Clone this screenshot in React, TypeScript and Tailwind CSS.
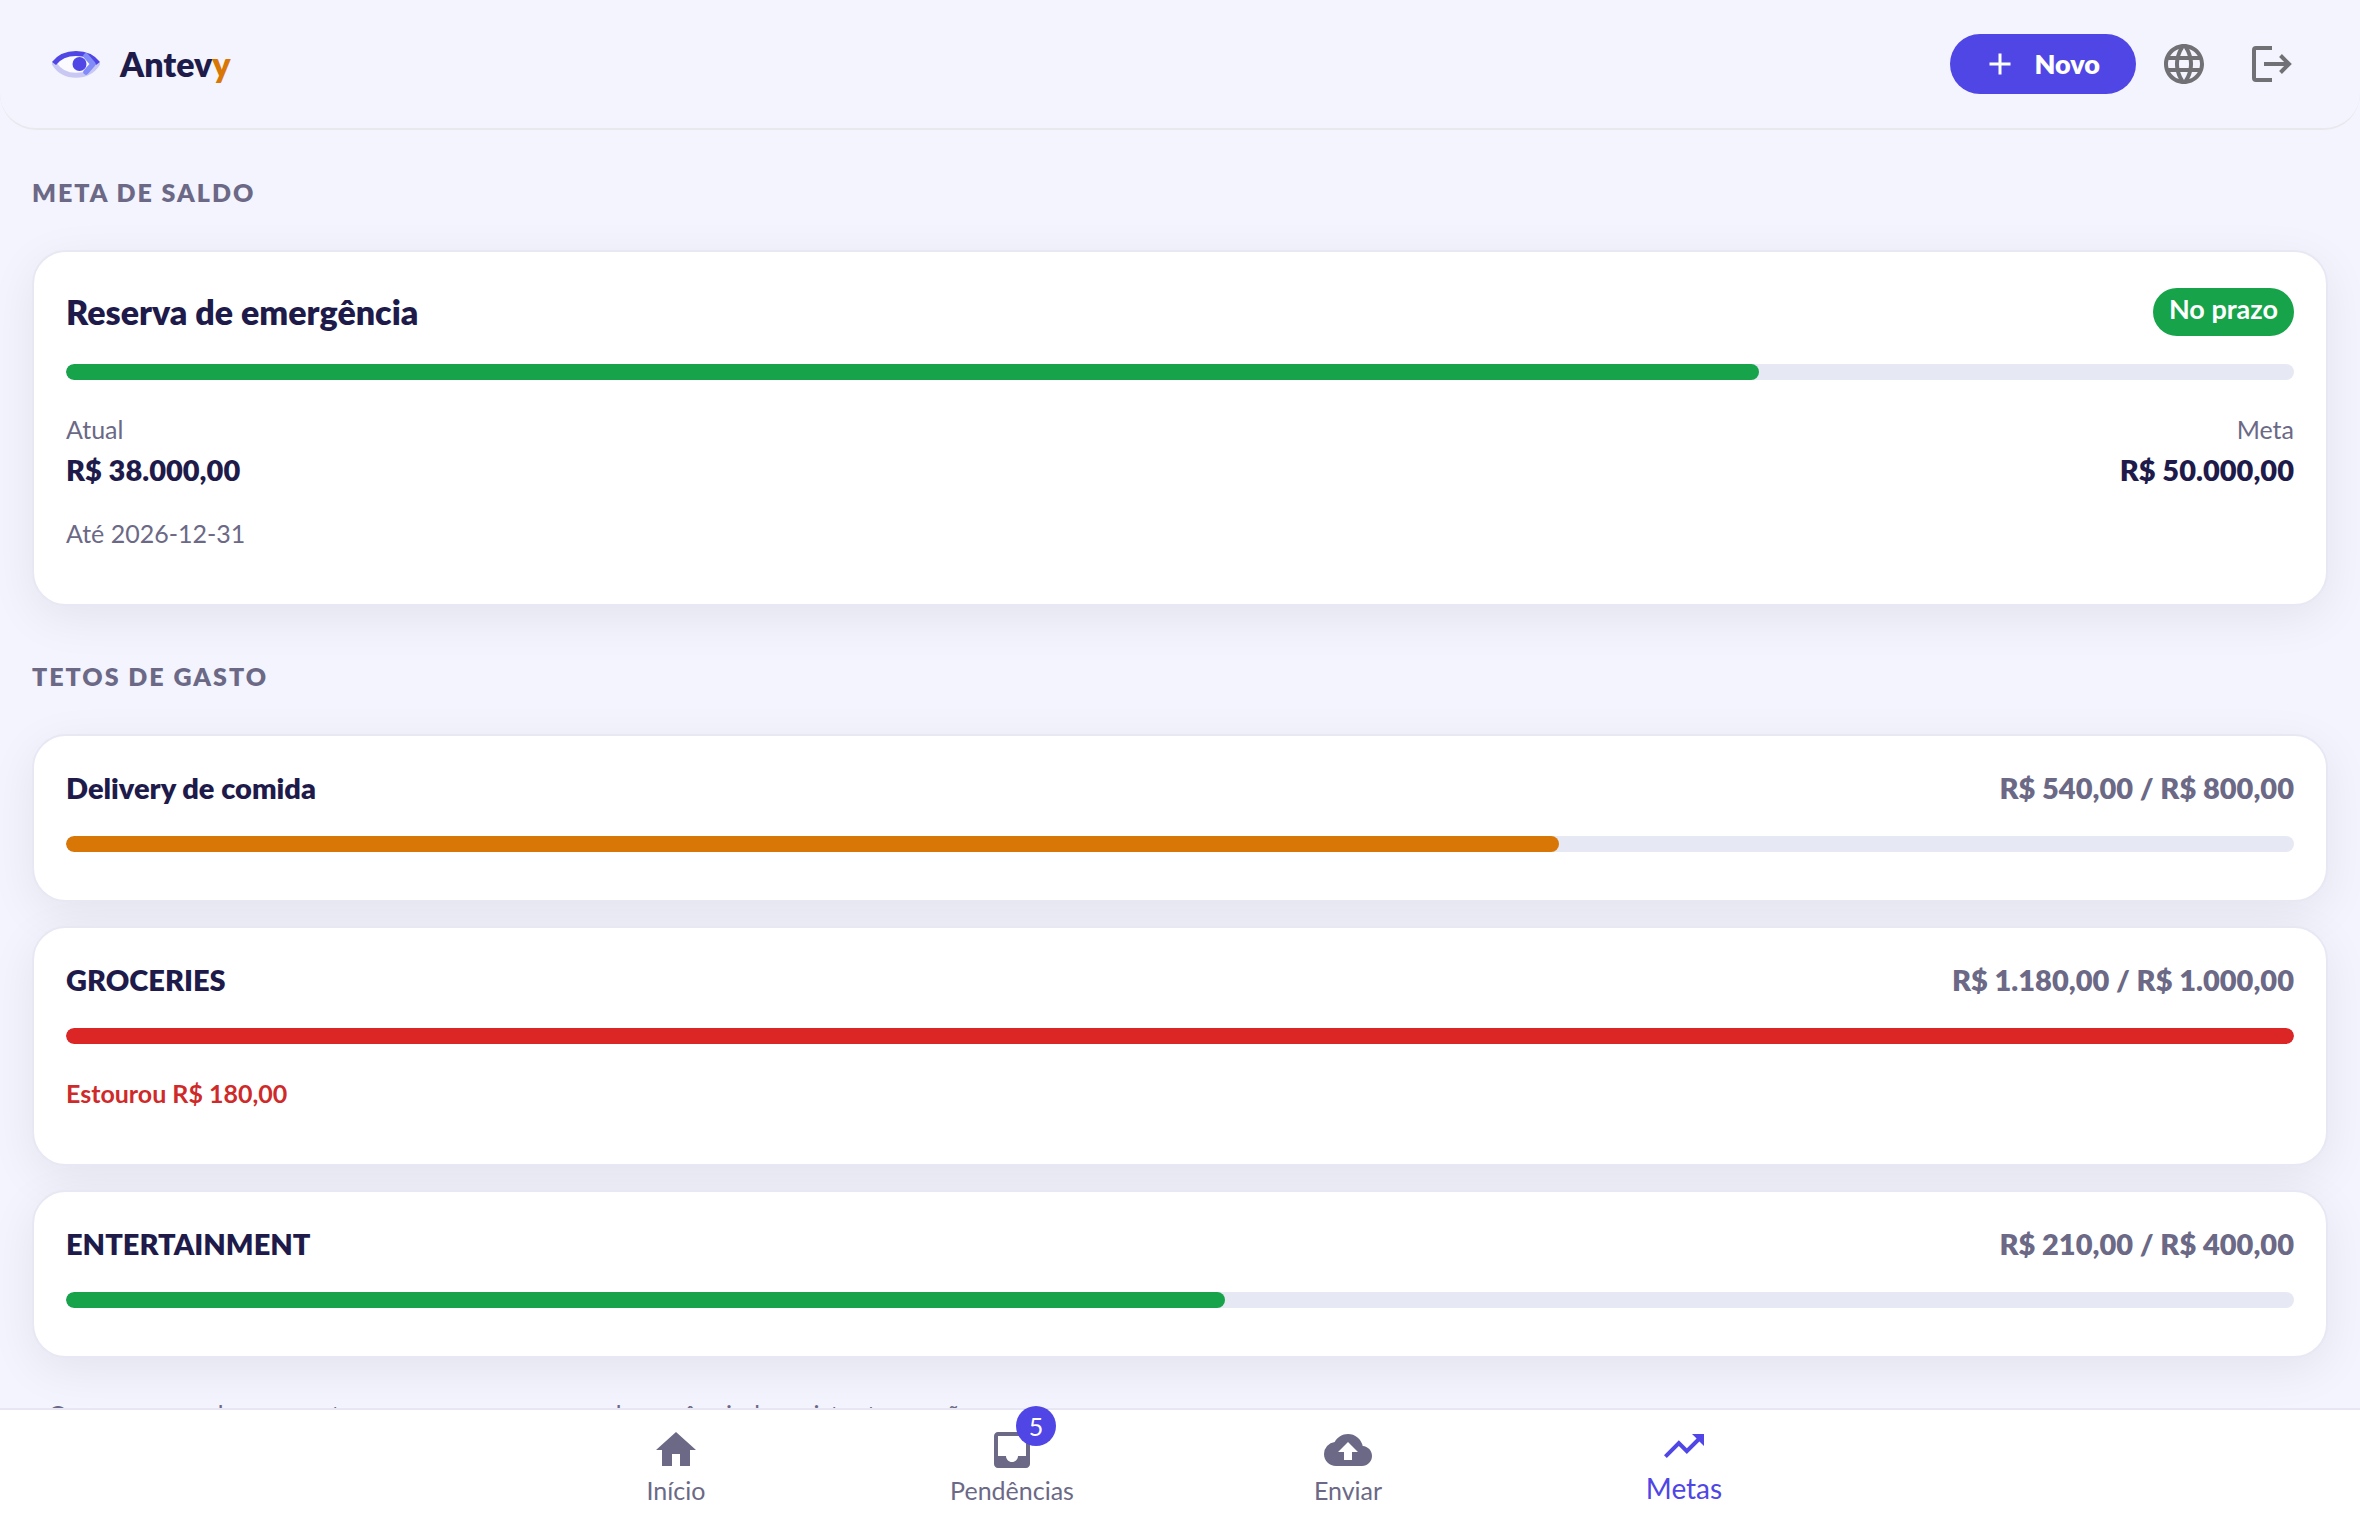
import { MdAdd, MdCloudUpload, MdHome, MdInbox, MdLanguage, MdTrendingUp } from "react-icons/md";

const budgets = [
  {
    name: "Delivery de comida",
    amount: "R$ 540,00 / R$ 800,00",
    percent: 67,
    color: "bg-[#d97706]",
  },
  {
    name: "GROCERIES",
    amount: "R$ 1.180,00 / R$ 1.000,00",
    percent: 100,
    color: "bg-[#dc2626]",
    warning: "Estourou R$ 180,00",
  },
  {
    name: "ENTERTAINMENT",
    amount: "R$ 210,00 / R$ 400,00",
    percent: 52,
    color: "bg-[#16a34a]",
  },
];

const tabs = [
  { label: "Início", icon: MdHome },
  { label: "Pendências", icon: MdInbox, badge: 5 },
  { label: "Enviar", icon: MdCloudUpload },
  { label: "Metas", icon: MdTrendingUp, active: true },
];

const Logo = () => (
  <svg viewBox="0 0 56 40" className="w-14 h-10" fill="none" aria-hidden="true">
    <path d="M6 20Q28 -1 50 20Q28 41 6 20Z" fill="#fafaff" />
    <path d="M6.500 20C16 35 40 35 49.500 20" stroke="#c9c8f4" strokeWidth="5" strokeLinecap="round" />
    <path d="M6 19.500C16 6 40 6 50 19.500" stroke="#4f46e5" strokeWidth="5" />
    <path d="M38 12L45 20L38 28" stroke="#818cf8" strokeWidth="5.500" strokeLinecap="round" strokeLinejoin="round" />
    <circle cx="31.500" cy="20" r="7" fill="#4f46e5" />
  </svg>
);

const LogoutIcon = () => (
  <svg viewBox="0 0 48 48" className="size-12" fill="none" stroke="currentColor" strokeWidth="4" aria-hidden="true">
    <path d="M24 8H8a2 2 0 0 0-2 2V38a2 2 0 0 0 2 2H24" />
    <path d="M16 24H41M32.500 15.500L41 24L32.500 32.500" />
  </svg>
);

const ProgressBar = ({ label, percent, color }: { label: string; percent: number; color: string }) => (
  <div
    role="progressbar"
    aria-label={label}
    aria-valuenow={percent}
    aria-valuemin={0}
    aria-valuemax={100}
    className="mt-7 h-4 rounded-full bg-[#e6e8f3] overflow-hidden"
  >
    <div className={`h-full rounded-full ${color}`} style={{ width: `${percent}%` }} />
  </div>
);

const SectionTitle = ({ children }: { children: string }) => (
  <h2 className="text-[25px] leading-9 font-extrabold tracking-[2px] text-[#6b6986] uppercase">{children}</h2>
);

const cardClass = "rounded-[34px] border-2 border-[#e7e8f4] bg-white px-8 shadow-[0_12px_48px_rgba(0,0,0,0.07)]";

export default function App() {
  return (
    <div className="flex h-screen flex-col bg-[#f3f4fd] font-['Lato',sans-serif] text-[#1e1b4b]">
      <header className="flex items-center justify-between rounded-b-[36px] border-b-2 border-[#e8e8ed] py-[34px] pr-16 pl-12">
        <a href="#" className="flex items-center gap-4">
          <Logo />
          <span className="text-[34px] leading-10 font-extrabold">
            Antev<span className="text-[#d97706]">y</span>
          </span>
        </a>

        <div className="flex items-center text-[#717175]">
          <button className="flex h-[60px] items-center gap-4 rounded-full bg-[#4f46e5] pr-9 pl-8 text-[27px] font-extrabold text-white">
            <MdAdd className="size-9" />
            Novo
          </button>
          <button aria-label="Idioma" className="ml-6">
            <MdLanguage className="size-12" />
          </button>
          <button aria-label="Sair" className="ml-10">
            <LogoutIcon />
          </button>
        </div>
      </header>

      <main className="min-h-0 flex-1 overflow-y-auto px-8 pt-11 [scrollbar-width:none]">
        <section>
          <SectionTitle>Meta de saldo</SectionTitle>

          <article className={`${cardClass} mt-10 pt-9 pb-[54px]`}>
            <div className="flex items-center justify-between">
              <h3 className="text-[34px] leading-11 font-extrabold">Reserva de emergência</h3>
              <span className="flex h-12 items-center rounded-full bg-[#16a34a] px-4 pb-1.5 text-[27px] font-bold text-white">
                No prazo
              </span>
            </div>

            <ProgressBar label="Reserva de emergência" percent={76} color="bg-[#16a34a]" />

            <dl className="mt-8 flex justify-between">
              <div>
                <dt className="text-[25px] leading-[34px] text-[#6b6986]">Atual</dt>
                <dd className="mt-0.5 text-[29px] leading-11 font-extrabold">R$ 38.000,00</dd>
              </div>
              <div className="text-right">
                <dt className="text-[25px] leading-[34px] text-[#6b6986]">Meta</dt>
                <dd className="mt-0.5 text-[29px] leading-11 font-extrabold">R$ 50.000,00</dd>
              </div>
            </dl>

            <p className="mt-6 text-[25px] leading-[34px] text-[#6b6986]">Até 2026-12-31</p>
          </article>
        </section>

        <section className="mt-13">
          <SectionTitle>Tetos de gasto</SectionTitle>

          <div className="mt-10 flex flex-col gap-6">
            {budgets.map((budget) => (
              <article key={budget.name} className={`${cardClass} pt-8 ${budget.warning ? "pb-[54px]" : "pb-12"}`}>
                <div className="flex items-center justify-between text-[29px] leading-10 font-extrabold">
                  <h3>{budget.name}</h3>
                  <span className="text-[#6b6986]">{budget.amount}</span>
                </div>

                <ProgressBar label={budget.name} percent={budget.percent} color={budget.color} />

                {budget.warning && (
                  <p className="mt-8 text-[25px] leading-[34px] font-bold text-[#cf2a2a]">{budget.warning}</p>
                )}
              </article>
            ))}
          </div>
        </section>

        <p className="mt-[38px] px-4 text-[25px] leading-9 text-[#6b6986]">
          Os progressos de suas metas crescem sempre quando o mês ainda registra transações
        </p>
      </main>

      <nav className="relative border-t-2 border-[#e6e7f3] bg-white pt-3 pb-3.5">
        <div className="mx-auto flex max-w-[1344px] items-end">
          {tabs.map(({ label, icon: Icon, badge, active }) => (
            <a
              key={label}
              href="#"
              aria-current={active ? "page" : undefined}
              className={`flex flex-1 flex-col items-center ${
                active ? "text-[28px] leading-9 text-[#4f46e5]" : "text-[25px] leading-8 text-[#6b6986]"
              }`}
            >
              <span className="relative">
                <Icon className="size-12" />
                {badge && (
                  <span className="absolute -top-5 -right-5 flex size-10 items-center justify-center rounded-full bg-[#4f46e5] text-[25px] text-white">
                    {badge}
                  </span>
                )}
              </span>
              {label}
            </a>
          ))}
        </div>
      </nav>
    </div>
  );
}
